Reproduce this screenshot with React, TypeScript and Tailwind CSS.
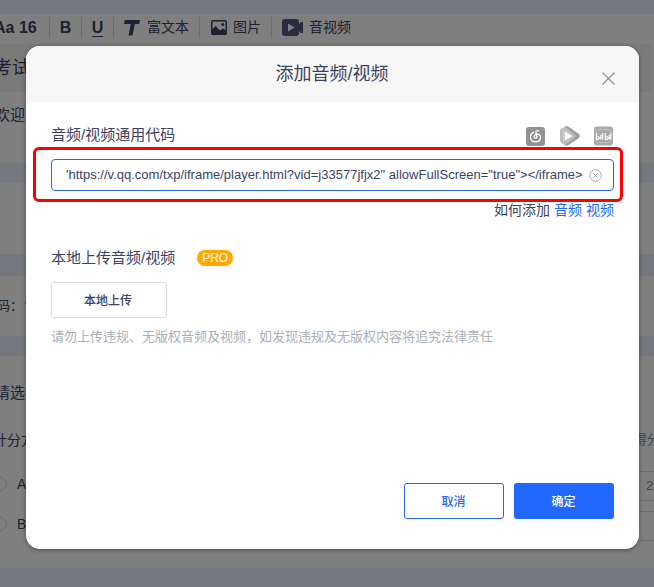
import React from "react";

function Divider() {
  return <span className="h-[21px] w-px shrink-0 bg-[#dcdcdf]" />;
}

function Toolbar() {
  return (
    <div className="flex h-[30px] w-full items-start bg-white pt-[3px] whitespace-nowrap">
      <div className="flex h-[21px] w-[49px] shrink-0 items-center font-bold text-base">
        <span className="-ml-[6px]">Aa 16</span>
      </div>
      <Divider />
      <div className="flex h-[21px] w-[31px] items-center justify-center text-base font-bold">B</div>
      <Divider />
      <div className="flex h-[21px] w-[31px] items-center justify-center">
        <span className="h-[18px] border-b border-[#3b4263] text-base leading-[18px] font-bold">U</span>
      </div>
      <Divider />
      <div className="flex h-[21px] w-[85px] items-center pl-[10px] text-sm">
        <svg width="16" height="16" viewBox="0 0 16 16" fill="#3b4263">
          <path d="M.8 0H16l-.8 4H10.800L8.500 15.500H4.500L6.800 4H0z" />
        </svg>
        <span className="-mt-px ml-[7px]">富文本</span>
      </div>
      <Divider />
      <div className="flex h-[21px] w-[71px] items-center pl-[11px] text-sm">
        <svg width="16" height="15" viewBox="0 0 16 15">
          <rect x=".75" y=".75" width="14.5" height="13.5" rx="1" fill="none" stroke="#3b4263" strokeWidth="1.500" />
          <path d="M1 9.500l3.500-3.500 4.500 4.500 3-2 3 2v4H1z" fill="#3b4263" />
          <circle cx="11.800" cy="4.500" r="1.500" fill="#3b4263" />
        </svg>
        <span className="-mt-px ml-[6px]">图片</span>
      </div>
      <Divider />
      <div className="flex h-[21px] w-[93px] items-center pl-[10px] text-sm">
        <svg width="21" height="17" viewBox="0 0 21 17" fill="#535b7e">
          <rect width="17" height="17" rx="3" />
          <path d="M16 6l3-3h2v11h-2l-3-3z" />
          <path d="M6 4.500v8l6.500-4z" fill="white" />
        </svg>
        <span className="-mt-px ml-[6px]">音视频</span>
      </div>
      <span className="h-[21px] w-px bg-[#f8f8f8]" />
    </div>
  );
}

function PageBehind() {
  return (
    <div className="flex h-full flex-col overflow-hidden whitespace-nowrap">
      <div className="h-[14px] shrink-0 bg-[#ebf3fc]" />
      <Toolbar />
      <div className="mr-[2px] flex h-[48px] shrink-0 items-center bg-[#f4f4f4] text-[18px]">
        <span className="-ml-[6px]">考试</span>
      </div>
      <div className="flex h-[71px] shrink-0 items-start bg-white pt-[11px] text-[15px] leading-6">
        <span className="-ml-[5px]">欢迎</span>
      </div>
      <div className="h-[20px] shrink-0 bg-[#ebf3fc]" />
      <div className="h-[71px] shrink-0 bg-white" />
      <div className="h-[22px] shrink-0 bg-[#ebf3fc]" />
      <div className="flex h-[60px] shrink-0 items-center bg-white text-[13px]">
        <span className="-ml-[3px]">码：</span>
        <span className="ml-[2px]">“</span>
      </div>
      <div className="h-[20px] shrink-0 bg-[#ebf3fc]" />
      <div className="flex h-[212px] shrink-0 justify-between bg-white">
        <div className="flex flex-col">
          <span className="mt-[25px] -ml-[5px] text-[15px] leading-6">请选择</span>
          <span className="mt-[23px] -ml-[7px] text-[14px] leading-6">计分方式</span>
          <div className="mt-[20px] -ml-[7px] flex h-6 items-center gap-[10px] text-sm">
            <i className="size-[14px] rounded-full border border-[#ddd]" />A
          </div>
          <div className="mt-[16px] -ml-[7px] flex h-6 items-center gap-[10px] text-sm">
            <i className="size-[14px] rounded-full border border-[#ddd]" />B
          </div>
        </div>
        <div className="flex w-[24px] flex-col text-[#8b8e9a]">
          <span className="mt-[72px] ml-[4px] text-[13px] leading-6">得分</span>
          <div className="mt-[19px] flex h-[30px] items-center border-y border-[#ddd] pl-[16px] text-[13px]">2</div>
          <div className="mt-[10px] h-[30px] border-y border-[#ddd]" />
        </div>
      </div>
      <div className="h-[19px] shrink-0 bg-[#ebf3fc]" />
    </div>
  );
}

function PlatformIcons() {
  return (
    <div className="flex items-center">
      <svg className="mr-[15px]" width="19" height="19" viewBox="0 0 19 19">
        <rect width="19" height="19" rx="3" fill="#929292" />
        <path
          d="M12.6 3.9c-1.500-.8-3 0-2.700 1.500l.9 4.200c.2 1-.4 1.600-1.300 1.600-.9 0-1.500-.8-1.300-1.800.3-1.400 1.500-2.200 2.800-2.200 2.100 0 3.500 1.400 3.500 3.400 0 2.500-2 4.300-4.900 4.300-3.100 0-5.200-2-5.200-4.900 0-2.200 1.200-3.900 3-4.700"
          fill="none"
          stroke="white"
          strokeWidth="1.300"
          strokeLinecap="round"
        />
      </svg>
      <svg className="mr-[14px]" width="20" height="20" viewBox="0 0 20 20">
        <path d="M0 4.500Q0 2 2.500 2.200L5 .5Q6.500-.3 8 .5L18.500 7.800Q21 10 18.500 12.200L8 19.200Q6.500 20 5 19.200L2 17.500Q0 16.500 0 14z" fill="#bdbdbd" />
        <path d="M5 .5Q6.500-.3 8 .5L18.500 7.800Q21 10 18.500 12.200L8 19.200Q6.500 20 5 19.200L16 10z" fill="#a0a0a0" />
        <path d="M3 4.500l10.500 5.500L3 16z" fill="#d0d0d0" />
        <path d="M5 5.500v9l7-4.500z" fill="white" />
      </svg>
      <svg width="19" height="20" viewBox="0 0 19 20">
        <rect y=".5" width="19" height="19" rx="3" fill="#a8a8a8" />
        <path d="M5.500 1.500l2 2h4l2-2M4.500 3.700h10q2.500 0 2.500 2.500v8q0 2.500-2.500 2.500h-10Q2 16.700 2 14.200v-8q0-2.500 2.500-2.500z" fill="none" stroke="#c0c0c0" />
        <path
          d="M2.500 7v6.500q2.700.2 2.700-1.500T2.500 10.500M6.800 9v4.500M8.500 7v6.500M11.200 7v6.500q2.700.2 2.700-1.500t-2.700-1.500M15.200 9v4.500M16.800 7v6.500"
          fill="none"
          stroke="white"
          strokeWidth="1.200"
        />
      </svg>
    </div>
  );
}

function Dialog() {
  return (
    <section
      role="dialog"
      className="absolute top-[46px] left-[26px] flex h-[503px] w-[613px] flex-col overflow-hidden rounded-[14px] bg-white shadow-[0_1px_4px_rgba(0,0,0,0.4)]"
    >
      <header className="grid h-[56px] shrink-0 grid-cols-[40px_1fr_40px] bg-[#f7f7f7]">
        <span />
        <h1 className="pt-[15px] pr-px text-center text-[18px] leading-[27px]">添加音频/视频</h1>
        <button className="flex items-start pt-[26px] pl-[3px]" aria-label="关闭">
          <svg width="13" height="13" viewBox="0 0 13 13" stroke="#8c8c98" strokeWidth="1.100">
            <path d="M.5.5l12 12M12.500.5l-12 12" />
          </svg>
        </button>
      </header>
      <div className="flex flex-1 flex-col px-[25px]">
        <div className="mt-[21px] flex h-[24px] shrink-0 items-center justify-between">
          <h2 className="text-[15px] leading-6">音频/视频通用代码</h2>
          <div className="pt-[2px] pr-px">
            <PlatformIcons />
          </div>
        </div>
        <div className="-mr-[9px] -ml-[18px] h-[55px] shrink-0 rounded-[6px] border-[3px] border-[#fe0000] pt-[9px] pr-[6px] pl-[15px]">
          <div className="flex h-[32px] items-center justify-between rounded-[4px] border border-[#2468f2] pr-[11px] pl-[14px]">
            <span className="shrink-0 text-[13px] tracking-[0.010px] whitespace-nowrap">
              'https://v.qq.com/txp/iframe/player.html?vid=j33577jfjx2" allowFullScreen="true"&gt;&lt;/iframe&gt;
            </span>
            <svg className="shrink-0" width="13" height="13" viewBox="0 0 13 13" fill="none" stroke="#aaaab3">
              <circle cx="6.500" cy="6.500" r="5.800" />
              <path d="M4.500 4.500l4 4m0-4l-4 4" />
            </svg>
          </div>
        </div>
        <div className="mt-[-4px] flex h-[24px] shrink-0 items-center justify-end gap-[4px] text-sm">
          <span>如何添加</span>
          <a className="text-[#2468ff]">音频</a>
          <a className="text-[#2468ff]">视频</a>
        </div>
        <div className="mt-[24px] flex h-[24px] shrink-0 items-center">
          <h2 className="text-[15px]">本地上传音频/视频</h2>
          <span className="ml-[22px] flex h-[16px] w-[36px] items-center justify-center rounded-full bg-[#ffa900] text-[12px] text-white">PRO</span>
        </div>
        <button className="mt-[12px] h-[36px] w-[116px] shrink-0 rounded-[3px] border border-[#dcdcdc] pt-px pr-[2px] text-xs font-medium">本地上传</button>
        <p className="mt-[9px] text-[13px] leading-[20px] text-[#aaaeb9]">请勿上传违规、无版权音频及视频，如发现违规及无版权内容将追究法律责任</p>
        <footer className="mt-auto mb-[30px] flex justify-end gap-[10px] text-xs font-medium">
          <button className="h-[36px] w-[100px] rounded-[3px] border border-[#2468f2] pt-px pr-px text-[#2468f2]">取消</button>
          <button className="h-[36px] w-[100px] rounded-[3px] bg-[#2068ff] pt-px pr-px text-white">确定</button>
        </footer>
      </div>
    </section>
  );
}

export default function App() {
  return (
    <main className="relative h-[587px] w-[654px] overflow-hidden bg-white font-['Liberation_Sans','Noto_Sans_CJK_SC',sans-serif] text-[#3b4263]">
      <PageBehind />
      <div className="absolute inset-0 bg-black/50" />
      <Dialog />
    </main>
  );
}
